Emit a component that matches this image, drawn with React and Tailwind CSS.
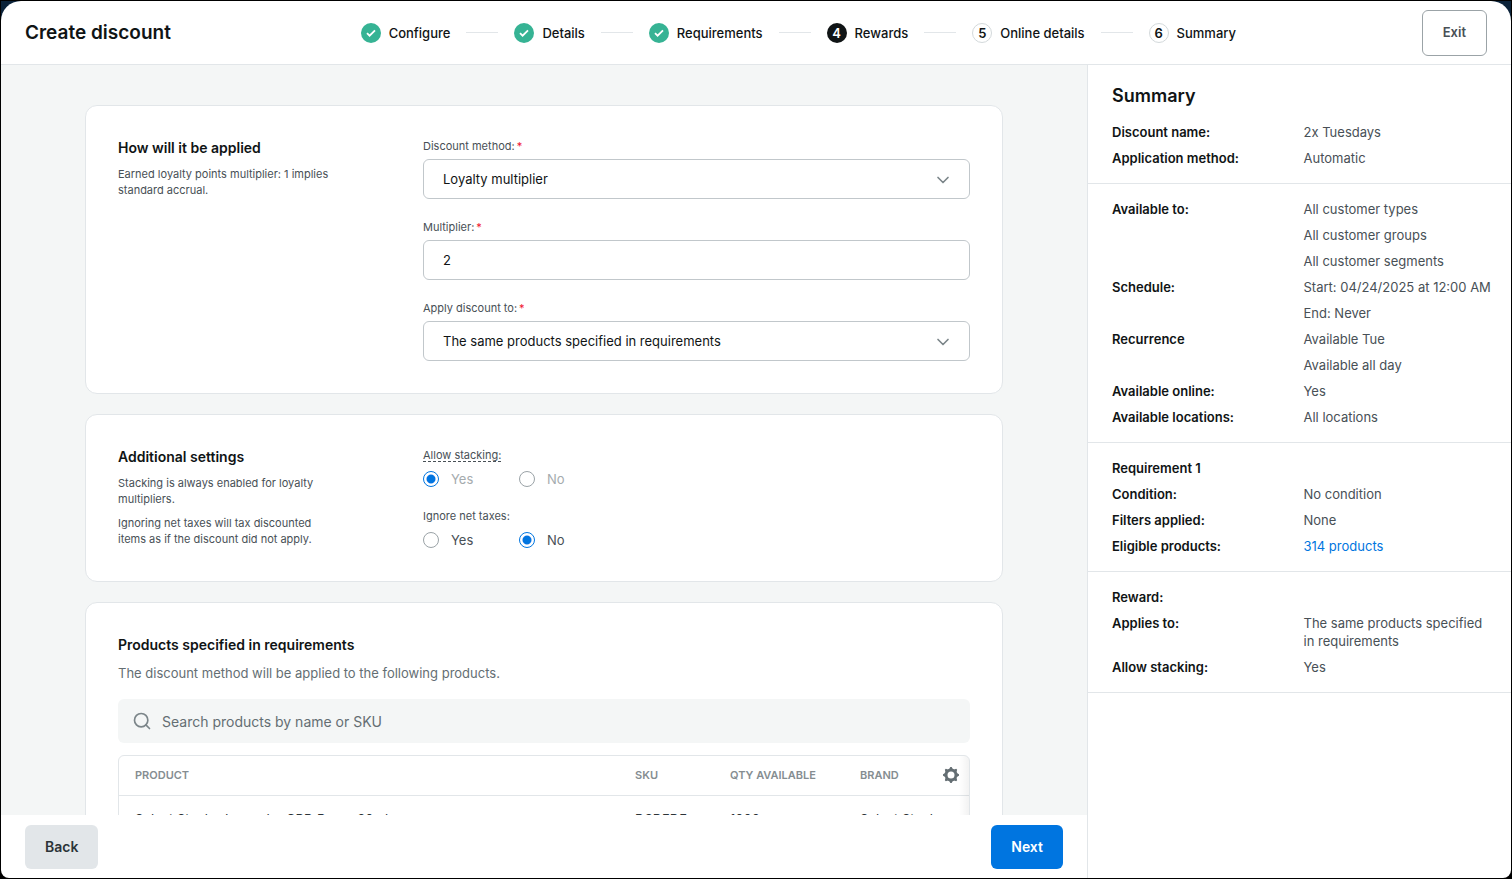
import { Fragment, useState } from "react";
import { Search, ChevronDown } from "lucide-react";

const STEPS = [
  { label: "Configure", state: "done" },
  { label: "Details", state: "done" },
  { label: "Requirements", state: "done" },
  { label: "Rewards", state: "current" },
  { label: "Online details", state: "todo" },
  { label: "Summary", state: "todo" },
];

const SUMMARY = [
  [
    { label: "Discount name:", values: ["2x Tuesdays"] },
    { label: "Application method:", values: ["Automatic"] },
  ],
  [
    { label: "Available to:", values: ["All customer types", "All customer groups", "All customer segments"] },
    { label: "Schedule:", values: ["Start: 04/24/2025 at 12:00 AM", "End: Never"] },
    { label: "Recurrence", values: ["Available Tue", "Available all day"] },
    { label: "Available online:", values: ["Yes"] },
    { label: "Available locations:", values: ["All locations"] },
  ],
  [
    { label: "Requirement 1", values: [] },
    { label: "Condition:", values: ["No condition"] },
    { label: "Filters applied:", values: ["None"] },
    { label: "Eligible products:", values: ["314 products"], link: true },
  ],
  [
    { label: "Reward:", values: [] },
    { label: "Applies to:", values: ["The same products specified in requirements"] },
    { label: "Allow stacking:", values: ["Yes"] },
  ],
];

function StepMark({ index, state }) {
  if (state === "done") {
    return (
      <span className="flex size-5 items-center justify-center rounded-full bg-[#36b394]">
        <svg viewBox="0 0 20 20" className="size-5" fill="none" stroke="white" strokeWidth="1.8" aria-hidden="true">
          <path d="M6 10.2l2.6 2.5L14 7.4" />
        </svg>
      </span>
    );
  }
  if (state === "current") {
    return (
      <span className="flex size-5 items-center justify-center rounded-full bg-[#101415] text-[13px] leading-5 font-semibold text-white">
        {index}
      </span>
    );
  }
  return (
    <span className="flex size-5 items-center justify-center rounded-full border border-[#d3d9db] text-[13px] leading-5 font-semibold">
      {index}
    </span>
  );
}

function Header() {
  return (
    <header className="flex h-16 shrink-0 items-center border-b border-[#e2e6e9] px-6">
      <h1 className="text-[19px] leading-7 font-semibold">Create discount</h1>
      <ol className="flex flex-1 items-center justify-center gap-4 pl-1">
        {STEPS.map((step, i) => (
          <Fragment key={step.label}>
            {i > 0 && <li aria-hidden="true" className="h-px w-8 bg-[#e2e6e9]" />}
            <li className="flex items-center gap-2">
              <StepMark index={i + 1} state={step.state} />
              <span className="text-[13px] leading-5 font-medium">{step.label}</span>
            </li>
          </Fragment>
        ))}
      </ol>
      <button type="button" className="h-[46px] rounded-md border border-[#9ba3a7] px-5 text-[13px] font-semibold text-[#485056]">
        Exit
      </button>
    </header>
  );
}

function Card({ children }) {
  return <section className="rounded-xl border border-[#e2e6e9] bg-white p-8">{children}</section>;
}

function CardTitle({ children }) {
  return <h2 className="text-[14px] leading-5 font-semibold">{children}</h2>;
}

function SplitCard({ title, notes, children }) {
  return (
    <Card>
      <div className="grid grid-cols-[220px_1fr] gap-x-[85px]">
        <div className="flex flex-col gap-2">
          <CardTitle>{title}</CardTitle>
          {notes.map((note) => (
            <p key={note} className="text-[11px] leading-4 text-[#485056]">{note}</p>
          ))}
        </div>
        <div className="flex flex-col gap-5">{children}</div>
      </div>
    </Card>
  );
}

function FieldLabel({ htmlFor, children }) {
  return (
    <label htmlFor={htmlFor} className="block text-[11px] leading-4 text-[#485056]">
      {children}
      <span className="ml-0.5 text-[#f0142f]">*</span>
    </label>
  );
}

const CONTROL = "h-10 w-full appearance-none rounded-md border border-[#c1c7cb] bg-white px-[19px] text-[13px] outline-none";

function SelectField({ id, label, options }) {
  return (
    <div className="flex flex-col gap-[5px]">
      <FieldLabel htmlFor={id}>{label}</FieldLabel>
      <div className="relative">
        <select id={id} className={`${CONTROL} pt-0.5`}>
          {options.map((option) => (
            <option key={option}>{option}</option>
          ))}
        </select>
        <ChevronDown aria-hidden="true" strokeWidth={2} className="pointer-events-none absolute top-[11px] right-[17px] size-5 text-[#7b8589]" />
      </div>
    </div>
  );
}

function RadioField({ name, label, value, onChange, disabled, hinted }) {
  return (
    <fieldset disabled={disabled} className="flex flex-col">
      <legend className="mb-[7px] flex h-4 text-[11px] leading-4 text-[#485056]">
        <span className={hinted ? "h-[15px] border-b border-dashed border-[#485056]" : ""}>{label}</span>
      </legend>
      <div className="flex">
        {["Yes", "No"].map((option) => (
          <label
            key={option}
            className={`flex h-[18px] w-24 items-center gap-3 text-[13px] leading-[18px] ${disabled ? "text-[#a5abae]" : "text-[#485056]"}`}
          >
            <input
              type="radio"
              name={name}
              value={option}
              checked={value === option}
              onChange={() => onChange(option)}
              className="size-4 shrink-0 appearance-none rounded-full border border-[#9ba3a7] bg-white checked:border-[#0075e0] checked:bg-radial checked:from-[#0075e0] checked:from-[4px] checked:to-white checked:to-[5px]"
            />
            {option}
          </label>
        ))}
      </div>
    </fieldset>
  );
}

function GearIcon() {
  return (
    <svg viewBox="0 0 16 16" className="size-4" aria-hidden="true">
      <circle cx="8" cy="8" r="5" fill="none" stroke="#646e73" strokeWidth="3" />
      {[0, 45, 90, 135, 180, 225, 270, 315].map((angle) => (
        <path key={angle} d="M6 2.4L7.3 0h1.4L10 2.4z" fill="#646e73" transform={`rotate(${angle} 8 8)`} />
      ))}
    </svg>
  );
}

function ProductsTable() {
  const th = "h-[39px] pl-4 text-left text-[11px] font-semibold text-[#858d91]";
  const td = "h-12 pl-4 text-[13px] whitespace-nowrap text-[#2c3438]";
  return (
    <div className="relative overflow-hidden rounded-md border border-[#e2e6e9]">
      <table className="w-full table-fixed">
        <thead>
          <tr className="border-b border-[#e2e6e9]">
            <th scope="col" className={th}>PRODUCT</th>
            <th scope="col" className={`${th} w-[95px]`}>SKU</th>
            <th scope="col" className={`${th} w-[130px]`}>QTY AVAILABLE</th>
            <th scope="col" className={`${th} w-[99px]`}>BRAND</th>
            <th scope="col" className="w-[26px]">
              <button type="button" aria-label="Table settings" className="flex items-center">
                <GearIcon />
              </button>
            </th>
          </tr>
        </thead>
        <tbody>
          <tr>
            <td className={td}>Select Stock - Lavender CBD Drops 30ml</td>
            <td className={td}>DSDFDF</td>
            <td className={td}>1000</td>
            <td className={td}>Select Stock</td>
            <td />
          </tr>
        </tbody>
      </table>
      <div className="pointer-events-none absolute inset-y-0 right-0 w-2.5 bg-linear-to-l from-black/5 to-transparent" />
    </div>
  );
}

function SummaryPanel() {
  return (
    <aside className="w-[424px] shrink-0 overflow-hidden border-l border-[#e2e6e9]">
      {SUMMARY.map((rows, i) => (
        <section key={rows[0].label} className="flex flex-col gap-2 border-b border-[#e2e6e9] py-4 pr-4 pl-6">
          {i === 0 && <h2 className="mb-1 text-[18px] leading-[30px] font-semibold">Summary</h2>}
          {rows.map((row) => (
            <dl key={row.label} className="grid grid-cols-2 text-[13px] leading-[18px]">
              <dt className="font-semibold">{row.label}</dt>
              <div className="flex flex-col gap-2 text-[#485056]">
                {row.values.map((value) => (
                  <dd key={value}>
                    {row.link ? <a href="#products" className="text-[#0075e0]">{value}</a> : value}
                  </dd>
                ))}
              </div>
            </dl>
          ))}
        </section>
      ))}
    </aside>
  );
}

export default function App() {
  const [stacking, setStacking] = useState("Yes");
  const [ignoreTaxes, setIgnoreTaxes] = useState("No");
  return (
    <div className="h-screen border border-black bg-linear-to-b from-[#0b2239] from-50% to-black to-50% font-['Inter',sans-serif] text-[#101415]">
      <div className="flex h-full flex-col overflow-hidden rounded-t-[20px] rounded-b-lg bg-white">
        <Header />
        <div className="flex min-h-0 flex-1">
          <div className="flex min-w-0 flex-1 flex-col">
            <main className="min-h-0 flex-1 overflow-hidden bg-[#f4f6f6] px-[84px] pt-10">
              <div className="flex flex-col gap-5">
                <SplitCard title="How will it be applied" notes={["Earned loyalty points multiplier: 1 implies standard accrual."]}>
                  <SelectField id="method" label="Discount method:" options={["Loyalty multiplier"]} />
                  <div className="flex flex-col gap-[5px]">
                    <FieldLabel htmlFor="multiplier">Multiplier:</FieldLabel>
                    <input id="multiplier" type="text" defaultValue="2" className={CONTROL} />
                  </div>
                  <SelectField id="apply-to" label="Apply discount to:" options={["The same products specified in requirements"]} />
                </SplitCard>
                <SplitCard
                  title="Additional settings"
                  notes={[
                    "Stacking is always enabled for loyalty multipliers.",
                    "Ignoring net taxes will tax discounted items as if the discount did not apply.",
                  ]}
                >
                  <RadioField name="stacking" label="Allow stacking:" value={stacking} onChange={setStacking} disabled hinted />
                  <RadioField name="taxes" label="Ignore net taxes:" value={ignoreTaxes} onChange={setIgnoreTaxes} />
                </SplitCard>
                <Card>
                  <CardTitle>Products specified in requirements</CardTitle>
                  <p className="mt-2 text-[13px] leading-5 text-[#646e73]">
                    The discount method will be applied to the following products.
                  </p>
                  <label className="mt-4 mb-3 flex h-11 items-center gap-2.5 rounded-md bg-[#f4f6f6] px-3.5">
                    <Search aria-hidden="true" strokeWidth={2} className="size-5 text-[#7b8589]" />
                    <input
                      type="search"
                      aria-label="Search products"
                      placeholder="Search products by name or SKU"
                      className="min-w-0 flex-1 bg-transparent text-[14px] outline-none placeholder:text-[#646e73]"
                    />
                  </label>
                  <ProductsTable />
                </Card>
              </div>
            </main>
            <footer className="flex h-[63px] shrink-0 items-center justify-between px-6">
              <button type="button" className="h-11 rounded-md bg-[#e2e6e9] px-5 text-[14px] font-semibold text-[#2c3438]">
                Back
              </button>
              <button type="button" className="h-11 rounded-md bg-[#0075e0] px-5 text-[14px] font-semibold text-white">
                Next
              </button>
            </footer>
          </div>
          <SummaryPanel />
        </div>
      </div>
    </div>
  );
}
